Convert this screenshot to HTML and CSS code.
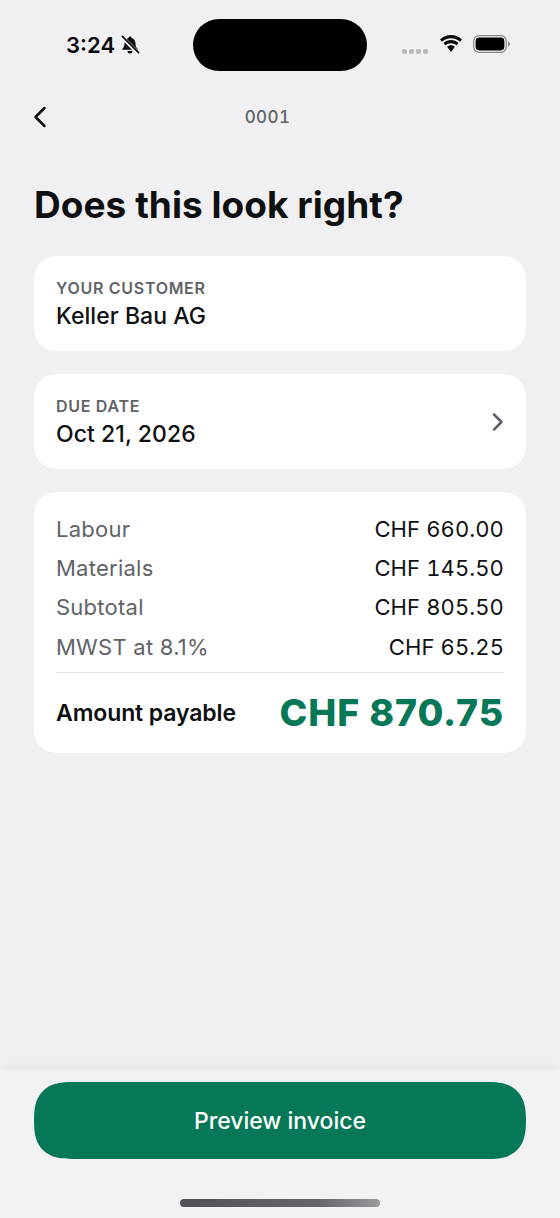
FILE: index.html
```html
<!DOCTYPE html>
<html lang="en">
<head>
<meta charset="utf-8">
<title>Does this look right?</title>
<link rel="stylesheet" href="styles.css">
</head>
<body>
<div class="screen">
  <header class="status">
    <div class="status-left">
      <span class="time">3:24</span>
      <svg class="bell" viewBox="0 0 20 20" aria-hidden="true">
        <path d="M10 1.600c-.8 0-1.300.6-1.400 1.300C5.900 3.600 4.600 5.800 4.500 8.400c-.1 2.500-.6 4-1.900 5.100-.5.5-.3 1.300.5 1.300h13.800c.8 0 1-.8.5-1.300-1.300-1.100-1.800-2.600-1.900-5.100-.1-2.600-1.400-4.800-3.900-5.500-.1-.7-.8-1.300-1.600-1.300z" fill="#0b0b0d"/>
        <path d="M7.500 16h5a2.500 2.500 0 0 1-5 0z" fill="#0b0b0d"/>
        <path d="M1.800 1.800 18.200 18.200" stroke="#f0f0f2" stroke-width="4"/>
        <path d="M2.400 1.400 18.600 17.600" stroke="#0b0b0d" stroke-width="1.700" stroke-linecap="round"/>
      </svg>
    </div>
    <div class="island"></div>
    <div class="status-right">
      <span class="signal"><i></i><i></i><i></i><i></i></span>
      <svg class="wifi" viewBox="0 0 24 18" aria-hidden="true">
        <path d="M12 3.200c3.500 0 6.700 1.300 9.100 3.500l1.900-2.300C20.100 1.700 16.200 0 12 0S3.900 1.700 1 4.400l1.900 2.300C5.300 4.500 8.500 3.200 12 3.200z" fill="#0b0b0d"/>
        <path d="M12 8.200c2.100 0 4.100.8 5.600 2.100l1.900-2.300C17.500 6.200 14.900 5.100 12 5.100S6.500 6.200 4.500 8l1.900 2.300c1.500-1.300 3.500-2.100 5.600-2.100z" fill="#0b0b0d"/>
        <path d="M12 10.200c-1.500 0-2.900.6-3.900 1.500l3.900 5.300 3.900-5.300c-1-.9-2.400-1.500-3.900-1.500z" fill="#0b0b0d"/>
      </svg>
      <svg class="battery" viewBox="0 0 38 18" aria-hidden="true">
        <rect x="0.700" y="0.700" width="32.600" height="16.600" rx="5.300" fill="none" stroke="#87878a" stroke-width="1.200"/>
        <rect x="2.600" y="2.600" width="28.800" height="12.800" rx="3.800" fill="#000"/>
        <path d="M35 6.500c1.200.3 2 1.300 2 2.500s-.8 2.200-2 2.500z" fill="#87878a"/>
      </svg>
    </div>
  </header>

  <nav class="nav">
    <svg class="back" viewBox="0 0 14 22" aria-hidden="true"><path d="M11.500 2 2.500 11l9 9" fill="none" stroke="#0f1012" stroke-width="2.500" stroke-linecap="round" stroke-linejoin="round"/></svg>
    <span class="nav-title">0001</span>
  </nav>

  <main class="content">
    <h1 class="title">Does this look right?</h1>

    <section class="card info">
      <div>
        <div class="label">YOUR CUSTOMER</div>
        <div class="value">Keller Bau AG</div>
      </div>
    </section>

    <section class="card info">
      <div>
        <div class="label">DUE DATE</div>
        <div class="value">Oct 21, 2026</div>
      </div>
      <svg class="chevron" viewBox="0 0 12 20" aria-hidden="true"><path d="M2 2.500l7.500 7.500-7.500 7.500" fill="none" stroke="#5d6166" stroke-width="2.500" stroke-linecap="round" stroke-linejoin="round"/></svg>
    </section>

    <section class="card totals">
      <div class="row"><span class="row-label">Labour</span><span class="row-value">CHF 660.00</span></div>
      <div class="row"><span class="row-label">Materials</span><span class="row-value">CHF 145.50</span></div>
      <div class="row"><span class="row-label">Subtotal</span><span class="row-value">CHF 805.50</span></div>
      <div class="row"><span class="row-label">MWST at 8.1%</span><span class="row-value">CHF 65.25</span></div>
      <div class="payable">
        <span class="payable-label">Amount payable</span>
        <span class="payable-value">CHF 870.75</span>
      </div>
    </section>
  </main>

  <footer class="footer">
    <button class="cta" type="button">Preview invoice</button>
    <div class="home"></div>
  </footer>
</div>
</body>
</html>
```

FILE: styles.css
```css
* { box-sizing: border-box; }
html, body { margin: 0; padding: 0; }
body {
  background: #f0f0f2;
  font-family: Inter, "Noto Sans", sans-serif;
  color: #0f1012;
}
.screen {
  width: 560px;
  height: 1218px;
  display: flex;
  flex-direction: column;
  overflow: hidden;
}
.status {
  height: 90px;
  padding: 19px 49px 0 66px;
  display: flex;
  align-items: flex-start;
}
.status-left {
  width: 127px;
  height: 52px;
  display: flex;
  align-items: center;
  gap: 5px;
}
.time {
  font-size: 22px;
  font-weight: 600;
  color: #0b0b0d;
  line-height: 1;
}
.bell { width: 20px; height: 20px; }
.island {
  width: 174px;
  height: 52px;
  border-radius: 26px;
  background: #000;
}
.status-right {
  flex: 1;
  height: 52px;
  display: flex;
  align-items: center;
  justify-content: flex-end;
}
.signal {
  display: flex;
  gap: 2px;
  margin: 12px 11px 0 0;
}
.signal i {
  width: 5px;
  height: 5px;
  border-radius: 2px;
  background: #b9b9bc;
}
.wifi { width: 24px; height: 18px; margin: 0 10px 3px 0; }
.battery { width: 38px; height: 18px; margin-bottom: 2px; }
.nav {
  height: 54px;
  position: relative;
  display: flex;
  align-items: center;
  justify-content: center;
  padding-right: 25px;
}
.back {
  position: absolute;
  left: 33px;
  top: 16px;
  width: 14px;
  height: 22px;
}
.nav-title {
  font-size: 17px;
  font-weight: 500;
  font-variant-numeric: tabular-nums;
  color: #5f6368;
  letter-spacing: 0.4px;
}
.content {
  flex: 1;
  padding: 0 34px;
  display: flex;
  flex-direction: column;
}
.title {
  margin: 36px 0 26px;
  font-size: 37px;
  line-height: 50px;
  font-weight: 700;
  letter-spacing: 0.04px;
  color: #0f1012;
}
.card {
  background: #fff;
  border-radius: 28px;
  corner-shape: superellipse(1.400);
  margin-bottom: 23px;
}
.info {
  height: 95px;
  padding: 0 22px;
  display: flex;
  align-items: center;
  justify-content: space-between;
}
.label {
  font-size: 16px;
  line-height: 20px;
  font-weight: 600;
  letter-spacing: 0.7px;
  color: #5f6368;
}
.value {
  margin-top: 4px;
  font-size: 23px;
  line-height: 28px;
  font-weight: 500;
  letter-spacing: 0.05px;
  color: #0f1012;
}
.chevron { width: 12px; height: 20px; }
.totals {
  height: 261px;
  padding: 17px 22px 0;
}
.row {
  height: 39.300px;
  display: flex;
  align-items: center;
  justify-content: space-between;
  font-size: 22px;
}
.row-label { color: #5f6368; letter-spacing: 0.25px; }
.row-value {
  color: #0f1012;
  font-variant-numeric: tabular-nums;
  letter-spacing: 0.1px;
}
.payable {
  margin-top: 6px;
  height: 80px;
  border-top: 1px solid #e4e4e6;
  display: flex;
  align-items: center;
  justify-content: space-between;
}
.payable-label {
  font-size: 23px;
  font-weight: 600;
  letter-spacing: -0.1px;
  color: #0f1012;
}
.payable-value {
  font-size: 37.500px;
  font-weight: 760;
  letter-spacing: 0.9px;
  color: #067857;
}
.footer {
  height: 148px;
  position: relative;
  background: #f2f2f4;
  padding: 12px 34px 0;
  display: flex;
  flex-direction: column;
  align-items: center;
  box-shadow: 0 -2px 16px rgba(0, 0, 0, 0.05);
}
.cta {
  width: 492px;
  height: 77px;
  border: 0;
  border-radius: 42px;
  corner-shape: superellipse(1.400);
  background: #067857;
  color: #fff;
  font-family: inherit;
  font-size: 23px;
  font-weight: 500;
}
.home {
  width: 200px;
  height: 8px;
  margin-top: 40px;
  border-radius: 4px;
  background: linear-gradient(90deg, #505357 0%, #63666a 70%, #9a9b9e 100%);
}
```
